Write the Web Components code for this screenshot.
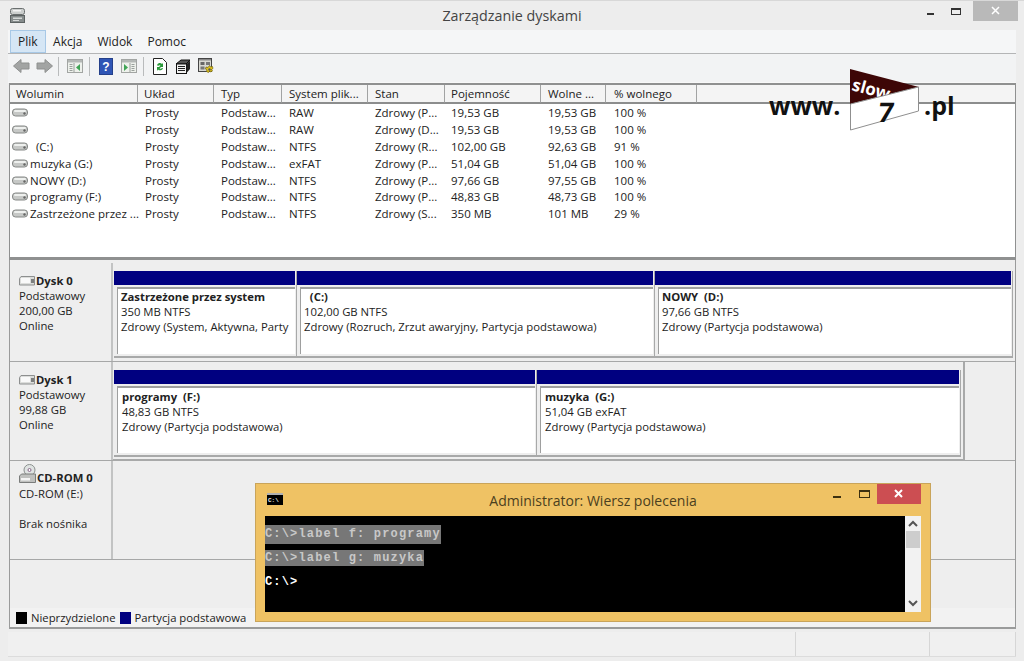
<!DOCTYPE html>
<html lang="pl">
<head>
<meta charset="utf-8">
<title>Zarządzanie dyskami</title>
<style>
    html, body { margin: 0; padding: 0; height: 100%; overflow: hidden; background: #ededed; }
    body { font: 12px "Open Sans", "Noto Sans", sans-serif; color: #222; }
</style>
</head>
<body>
<mmc-window>
    <title-bar slot="title">Zarządzanie dyskami</title-bar>
    <menu-bar slot="menu"></menu-bar>
    <tool-bar slot="tools"></tool-bar>
    <volume-list slot="list"></volume-list>
    <disk-panel slot="disks">
        <disk-row name="Dysk 0" lines="Podstawowy|200,00 GB|Online">
            <part-box style="width:183px" name="Zastrzeżone przez system" size="350 MB NTFS" state="Zdrowy (System, Aktywna, Party"></part-box>
            <part-box style="width:358px" name="&nbsp;&nbsp;(C:)" size="102,00 GB NTFS" state="Zdrowy (Rozruch, Zrzut awaryjny, Partycja podstawowa)"></part-box>
            <part-box style="width:358px" name="NOWY  (D:)" size="97,66 GB NTFS" state="Zdrowy (Partycja podstawowa)"></part-box>
        </disk-row>
        <disk-row name="Dysk 1" lines="Podstawowy|99,88 GB|Online" framed>
            <part-box style="width:423px" name="programy  (F:)" size="48,83 GB NTFS" state="Zdrowy (Partycja podstawowa)"></part-box>
            <part-box style="width:424px" name="muzyka  (G:)" size="51,04 GB exFAT" state="Zdrowy (Partycja podstawowa)"></part-box>
        </disk-row>
        <disk-row name="CD-ROM 0" lines="CD-ROM (E:)|&nbsp;|Brak nośnika" cd></disk-row>
    </disk-panel>
    <status-bar slot="status"></status-bar>
</mmc-window>
<slow-logo></slow-logo>
<cmd-window></cmd-window>

<script>
    // small icons used in more than one element
    const HDD = `<svg width="16" height="9" viewBox="0 0 16 9"><rect x=".5" y="1" width="15" height="7" rx="3" fill="#c6c8c6" stroke="#858886"/><rect x="2" y="2" width="12" height="2" rx="1" fill="#eef0ee"/><circle cx="12.500" cy="5.500" r="1.200" fill="#666"/></svg>`;
    const DISK = `<svg width="16" height="10" viewBox="0 0 16 10"><path d="M.5 2.500L2 .5h13.500v8.500H.5z" fill="#dcdddb" stroke="#8d8f8f"/><rect x="2" y="2" width="9" height="5" fill="#f9f9f9"/><rect x="12" y="3" width="3" height="4" fill="#7c7e7e"/></svg>`;
    const CD = `<svg width="17" height="19" viewBox="0 0 17 19"><circle cx="10.500" cy="6" r="5.500" fill="#dfe3e2" stroke="#8b908e"/><circle cx="10.500" cy="6" r="1.500" fill="#fff" stroke="#868"/><path d="M.5 12l2-2h14v8.500H.5z" fill="#bfc0be" stroke="#7a7c7b"/><rect x="2" y="14" width="9" height="2.500" fill="#f4f4f4"/></svg>`;

    class MmcWindow extends HTMLElement {
        constructor() {
            super();
            this.attachShadow({ mode: 'open' });
            this.shadowRoot.innerHTML = `
                <style>
                    :host { display: flex; flex-direction: column; width: 1024px; height: 661px; background: #ededed; border-top: 1px solid #d8d8d8; box-sizing: border-box; }
                    .body { display: flex; flex-direction: column; margin: 0 8px; }
                </style>
                <slot name="title"></slot>
                <div class="body">
                    <slot name="menu"></slot>
                    <slot name="tools"></slot>
                    <slot name="list"></slot>
                    <slot name="disks"></slot>
                    <slot name="status"></slot>
                </div>
            `;
        }
    }

    class TitleBar extends HTMLElement {
        constructor() {
            super();
            this.attachShadow({ mode: 'open' });
            this.shadowRoot.innerHTML = `
                <style>
                    :host { display: grid; grid-template-columns: 1fr auto 1fr; align-items: start; height: 29px; color: #444; font-size: 14.3px; }
                    .ico { padding: 7px 0 0 10px; height: 15px; }
                    .txt { padding-top: 5px; }
                    .btns { display: flex; justify-content: flex-end; padding-right: 6px; }
                    .b { width: 25px; height: 20px; display: flex; justify-content: center; }
                    .close { width: 45px; background: #b9b9b9; margin-left: 5px; }
                    svg { display: block; }
                </style>
                <div class="ico">
                    <svg width="15" height="15" viewBox="0 0 15 15"><rect x=".5" y=".5" width="14" height="6" rx="2" fill="#cbcecd" stroke="#6a6f6f"/><rect x="3" y="2" width="8" height="1.500" fill="#f3f3f3"/><rect x=".5" y="7.500" width="14" height="7" fill="#868c8c" stroke="#5c6262"/><rect x="3" y="9.500" width="9" height="1.500" fill="#d6d9d8"/><rect x="3" y="12" width="6" height="1" fill="#d6d9d8"/></svg>
                </div>
                <div class="txt"><slot></slot></div>
                <div class="btns">
                    <div class="b"><svg width="10" height="20"><rect x="1" y="12" width="7" height="2" fill="#333"/></svg></div>
                    <div class="b"><svg width="12" height="20"><rect x="1.500" y="7.500" width="9" height="6" fill="none" stroke="#333"/><rect x="1" y="7" width="10" height="2" fill="#333"/></svg></div>
                    <div class="b close"><svg width="12" height="20"><path d="M2 6l7 7M9 6l-7 7" stroke="#fff" stroke-width="1.500"/></svg></div>
                </div>
            `;
        }
    }

    class MenuBar extends HTMLElement {
        constructor() {
            super();
            this.attachShadow({ mode: 'open' });
            this.shadowRoot.innerHTML = `
                <style>
                    :host { display: flex; height: 23px; background: #f5f6f7; border-bottom: 1px solid #b4b5b6; padding-left: 2px; line-height: 24px; color: #222; }
                    span { padding: 0 7.5px; }
                    .on { background: #d5e6f5; border: 1px solid #a7c8e6; padding: 0 7px; line-height: 22px; height: 21px; }
                </style>
                <span class="on">Plik</span><span>Akcja</span><span>Widok</span><span>Pomoc</span>
            `;
        }
    }

    class ToolBar extends HTMLElement {
        constructor() {
            super();
            this.attachShadow({ mode: 'open' });
            // two mmc panes, lines on one side and the green arrow on the other
            const panel = (lines, mark) => `<svg width="16" height="14" viewBox="0 0 16 14"><rect x=".5" y=".5" width="15" height="13" fill="#eef1ec" stroke="#a2a5a3"/><rect x="1" y="1" width="14" height="2.500" fill="#b4b8b6"/><path d="${lines}" stroke="#9aa09c"/><path d="${mark}" fill="#3fa455"/></svg>`;
            this.shadowRoot.innerHTML = `
                <style>
                    :host { display: flex; align-items: center; height: 29px; box-sizing: border-box; background: #f2f3f4; padding: 0 0 4px 5px; border-bottom: 1px solid #f8f8f8; }
                    svg { display: block; flex: none; }
                    .sep { width: 1px; height: 19px; background: #b9bbbc; }
                </style>
                <svg style="margin-right:6px" width="17" height="14" viewBox="0 0 17 14"><path d="M.5 7L8 .5V4h8v6H8v3.500z" fill="#a2a4a3" stroke="#8e908f"/></svg>
                <svg style="margin-right:5px" width="17" height="14" viewBox="0 0 17 14"><path d="M16.500 7L9 .5V4H1v6h8v3.500z" fill="#a2a4a3" stroke="#8e908f"/></svg>
                <div class="sep" style="margin-right:8px"></div>
                ${panel('M2.500 5.500h3M2.500 7.500h3M2.500 9.500h3M2.500 11.500h3M7 4v9', 'M9 8.500l4-3.500v7z')}
                <div class="sep" style="margin:0 9px 0 6px"></div>
                <svg width="14" height="17" viewBox="0 0 14 17"><rect x=".5" y=".5" width="13" height="16" fill="#2f55b5" stroke="#24408a"/><text x="7" y="13" text-anchor="middle" fill="#fff" font-family="Liberation Sans" font-weight="bold" font-size="12">?</text></svg>
                <div style="width:8px"></div>
                ${panel('M10.500 5.500h3M10.500 7.500h3M10.500 9.500h3M10.500 11.500h3M9 4v9', 'M3 5l4 3.500-4 3.500z')}
                <div class="sep" style="margin:0 9px 0 6px"></div>
                <svg width="14" height="17" viewBox="0 0 14 17"><path d="M.5.5h9l4 4v12H.5z" fill="#fff" stroke="#222"/><path d="M4 7a3 3 0 0 1 5-1l1-1v4H6l1.500-1.500A2 2 0 0 0 5 8zM10 10a3 3 0 0 1-5 1.500L4 13V9h4l-1.500 1.500A2 2 0 0 0 9 10z" fill="#2a9a3a"/></svg>
                <div style="width:8px"></div>
                <svg width="16" height="15" viewBox="0 0 16 15"><path d="M1 5l5-4h9l-4 4z" fill="#555" stroke="#111"/><rect x="1.500" y="5" width="10" height="9.500" fill="#f2f2f2" stroke="#111"/><path d="M3 7.500h7M3 9.500h7M3 11.500h7" stroke="#222"/><path d="M11.500 5L15 1.500V10l-3.500 4z" fill="#222"/></svg>
                <div style="width:7px"></div>
                <svg width="16" height="16" viewBox="0 0 16 16"><rect x=".5" y=".5" width="13" height="13" fill="#d8d8d2" stroke="#444"/><rect x="1" y="1" width="12" height="1.500" fill="#888"/><rect x="2.500" y="4" width="4" height="3" fill="#666"/><rect x="8" y="4" width="4" height="3" fill="#777"/><rect x="2.500" y="8.500" width="4" height="3" fill="#777"/><path d="M11.500 7.500l1 1.500 2-.5.5 2-1.500 1 1 1.500-2 1-1-1-1 1.500-2-1 .5-1.500-1.500-1 .5-2 2 .5z" fill="#e3c51a" stroke="#6e6210" stroke-width=".7"/><circle cx="11.500" cy="11.500" r="1.200" fill="#555"/></svg>
            `;
        }
    }

    const COLS = [
        ['Wolumin', 129], ['Układ', 76], ['Typ', 68], ['System plik...', 86], ['Stan', 77],
        ['Pojemność', 96], ['Wolne ...', 65], ['% wolnego', 91]
    ];
    const ROWS = [
        ['', 'Prosty', 'Podstaw...', 'RAW', 'Zdrowy (P...', '19,53 GB', '19,53 GB', '100 %'],
        ['', 'Prosty', 'Podstaw...', 'RAW', 'Zdrowy (D...', '19,53 GB', '19,53 GB', '100 %'],
        [' (C:)', 'Prosty', 'Podstaw...', 'NTFS', 'Zdrowy (R...', '102,00 GB', '92,63 GB', '91 %'],
        ['muzyka (G:)', 'Prosty', 'Podstaw...', 'exFAT', 'Zdrowy (P...', '51,04 GB', '51,04 GB', '100 %'],
        ['NOWY (D:)', 'Prosty', 'Podstaw...', 'NTFS', 'Zdrowy (P...', '97,66 GB', '97,55 GB', '100 %'],
        ['programy (F:)', 'Prosty', 'Podstaw...', 'NTFS', 'Zdrowy (P...', '48,83 GB', '48,73 GB', '100 %'],
        ['Zastrzeżone przez ...', 'Prosty', 'Podstaw...', 'NTFS', 'Zdrowy (S...', '350 MB', '101 MB', '29 %']
    ];

    class VolumeList extends HTMLElement {
        constructor() {
            super();
            this.attachShadow({ mode: 'open' });
            const tmpl = COLS.map(c => c[1] + 'px').join(' ') + ' 1fr';
            const head = COLS.map(c => `<div class="h">${c[0]}</div>`).join('') + '<div class="h last"></div>';
            const rows = ROWS.map(r => r.map((t, i) => i === 0
                ? `<div class="c first">${HDD}<span>${t.replace(/^ /, '&nbsp;&nbsp;')}</span></div>`
                : `<div class="c">${t}</div>`).join('') + '<div></div>').join('');
            this.shadowRoot.innerHTML = `
                <style>
                    :host { display: block; height: 177px; margin-left: 1px; background: #fff; border: solid #8f9090; border-width: 2px 1px 3px 1px; box-sizing: border-box; font-size: 11.5px; color: #222; }
                    .g { display: grid; grid-template-columns: ${tmpl}; }
                    .h { height: 17px; line-height: 18px; background: #f4f4f4; border-right: 2px solid #a2a3a3; border-bottom: 2px solid #8c8d8d; padding-left: 7px; white-space: nowrap; overflow: hidden; margin-left: -1px; }
                    .h:first-child { margin-left: 0; padding-left: 6px; }
                    .h:nth-child(2), .h:nth-child(6) { padding-left: 6px; }
                    .h:nth-child(8) { padding-left: 8px; }
                    .last { border-right: 0; }
                    .rows { grid-auto-rows: 16.9px; line-height: 17px; }
                    .c { padding-left: 6px; white-space: nowrap; overflow: hidden; }
                    .c:nth-child(9n+6) { padding-left: 5px; }
                    .c:nth-child(9n+8) { padding-left: 7px; }
                    .first { display: flex; align-items: center; padding-left: 2px; gap: 2px; }
                    svg { flex: none; }
                </style>
                <div class="g">${head}</div>
                <div class="g rows">${rows}</div>
            `;
        }
    }

    class DiskPanel extends HTMLElement {
        constructor() {
            super();
            this.attachShadow({ mode: 'open' });
            this.shadowRoot.innerHTML = `
                <style>
                    :host { display: flex; flex-direction: column; height: 369px; margin-left: 1px; box-sizing: border-box; background: #eeeeee; border: solid #9a9b9b; border-width: 0 1px 2px 1px; font-size: 11.3px; }
                    .rows { flex: 1; padding-top: 3px; }
                    .legend { display: flex; align-items: center; height: 19px; padding-left: 6px; background: #f2f2f2; color: #222; }
                    .sq { width: 11px; height: 12px; margin-right: 4px; }
                </style>
                <div class="rows"><slot></slot></div>
                <div class="legend">
                    <div class="sq" style="background:#000"></div><span style="margin-right:4px">Nieprzydzielone</span>
                    <div class="sq" style="background:#000080"></div><span>Partycja podstawowa</span>
                </div>
            `;
        }
    }

    class DiskRow extends HTMLElement {
        constructor() {
            super();
            this.attachShadow({ mode: 'open' });
            const lines = this.getAttribute('lines').split('|').map(l => `<div>${l}</div>`).join('');
            const ico = this.hasAttribute('cd') ? CD : DISK;
            this.shadowRoot.innerHTML = `
                <style>
                    :host { display: flex; height: 99px; border-bottom: 1px solid #a6a7a7; box-sizing: border-box; --box-top: 0px; --box-left: 3px; }
                    :host([framed]) { --box-top: 1px; --box-left: 4px; }
                    .info { width: 103px; flex: none; box-sizing: border-box; padding: 10px 0 0 9px; border-right: 2px solid #c2c3c3; line-height: 15px; color: #222; }
                    .name { display: flex; align-items: flex-end; font-weight: 700; gap: 1px; height: 15px; }
                    :host([cd]) .name { margin: -1px 0 1px; }
                    .name svg { flex: none; margin-bottom: 2px; }
                    .parts { display: flex; flex: 1; align-self: flex-start; padding: 8px 0 0 1px; }
                    :host([framed]) .parts { flex: none; border: solid #a8a9a9; border-width: 0 2px 2px 0; padding-right: 2px; padding-bottom: 2px; }
                </style>
                <div class="info"><div class="name">${ico}<span>${this.getAttribute('name')}</span></div>${lines}</div>
                <div class="parts"><slot></slot></div>
            `;
        }
    }

    class PartBox extends HTMLElement {
        constructor() {
            super();
            this.attachShadow({ mode: 'open' });
            this.shadowRoot.innerHTML = `
                <style>
                    :host { display: block; flex: none; box-sizing: border-box; border-right: 1px solid #a8a9a9; border-bottom: 2px solid #a8a9a9; padding-right: 1px; line-height: 15px; color: #222; }
                    .bar { height: 14px; background: #000080; }
                    .box { margin: 2px 0 2px 3px; height: 67px; box-sizing: border-box; background: #fff; border: solid #9e9f9f; border-width: 2px 0 0 1px; padding: var(--box-top, 0) 0 0 var(--box-left, 3px); white-space: nowrap; overflow: hidden; }
                    b { white-space: pre; }
                </style>
                <div class="bar"></div>
                <div class="box">
                    <b>${this.getAttribute('name')}</b>
                    <div>${this.getAttribute('size')}</div>
                    <div>${this.getAttribute('state')}</div>
                </div>
            `;
        }
    }

    class StatusBar extends HTMLElement {
        constructor() {
            super();
            this.attachShadow({ mode: 'open' });
            this.shadowRoot.innerHTML = `
                <style>
                    :host { display: grid; grid-template-columns: 788px 134px 1fr; height: 24px; margin-top: 3px; background: #f0f0f0; border-bottom: 1px solid #dcdcdc; }
                    div { border-right: 1px solid #d6d6d6; }
                </style>
                <div></div><div></div><div></div>
            `;
        }
    }

    // logo sits over the list header, same as on the picture
    class SlowLogo extends HTMLElement {
        constructor() {
            super();
            this.attachShadow({ mode: 'open' });
            this.shadowRoot.innerHTML = `
                <style>
                    :host { display: block; position: absolute; left: 765px; top: 65px; width: 200px; height: 70px; }
                    svg { display: block; }
                </style>
                <svg width="200" height="70" viewBox="0 0 200 70" font-family="Open Sans, sans-serif" font-weight="700">
                    <text x="4" y="50" font-size="25" fill="#111">www.</text>
                    <path d="M85 4l69 18-69 17z" fill="#3d0606"/>
                    <text transform="translate(86 25) rotate(15)" font-size="17" fill="#fff">slow</text>
                    <path d="M85.500 39l68-17v24l-68 19z" fill="#fff" stroke="#8f8f8f"/>
                    <text transform="translate(112 57) skewX(-8)" font-size="27" fill="#111">7</text>
                    <text x="159" y="50" font-size="25" fill="#111">.pl</text>
                </svg>
            `;
        }
    }

    // console window floats above the main one
    class CmdWindow extends HTMLElement {
        constructor() {
            super();
            this.attachShadow({ mode: 'open' });
            this.shadowRoot.innerHTML = `
                <style>
                    :host { display: flex; flex-direction: column; position: absolute; left: 255px; top: 483px; width: 676px; height: 139px; box-sizing: border-box; background: #efc264; border: 1px solid #c9a45a; padding: 0 9px 9px; }
                    .top { display: flex; align-items: flex-start; height: 32px; flex: none; color: #4b4020; font-size: 14px; }
                    .top svg { display: block; }
                    .ico { padding: 9px 0 0 2px; width: 300px; }
                    .ttl { padding-top: 7px; position: absolute; left: 0; right: 0; text-align: center; }
                    .btn { margin-left: auto; display: flex; position: relative; }
                    .b { width: 25px; height: 20px; display: flex; justify-content: center; }
                    .m { margin-right: 2px; }
                    .x { width: 44px; background: #cc4e52; margin-left: 0; }
                    .main { display: flex; flex: 1; min-height: 0; }
                    .con { flex: 1; background: #000; padding-top: 9px; font: 700 12px/16px "Liberation Mono", monospace; letter-spacing: 1.17px; color: #fff; white-space: pre; }
                    .sel { display: block; width: max-content; background: #777; color: #c8c8c8; height: 19px; line-height: 18px; margin-bottom: 6px; }
                    .sel + .sel { height: 16px; line-height: 16px; margin-bottom: 8px; }
                    .sb { width: 16px; background: #f2f2f2; display: flex; flex-direction: column; align-items: center; padding-top: 4px; box-sizing: border-box; }
                    .th { width: 14px; height: 17px; background: #cdcdcd; margin-top: 4px; }
                    .sp { flex: 1; }
                    .lbl { fill: #eee; font: 700 6px "Liberation Mono", monospace; }
                </style>
                <div class="top">
                    <div class="ico"><svg width="16" height="12"><rect width="16" height="12" fill="#000"/><rect width="16" height="2" fill="#b0b0b0"/><text class="lbl" x="1" y="9">C:\\</text></svg></div>
                    <div class="ttl">Administrator: Wiersz polecenia</div>
                    <div class="btn">
                        <div class="b m"><svg width="10" height="20"><rect x="0" y="12" width="8" height="2" fill="#3c3010"/></svg></div>
                        <div class="b"><svg width="12" height="20"><rect x=".5" y="6.500" width="10" height="7" fill="none" stroke="#3c3010"/><rect y="6" width="11" height="2" fill="#3c3010"/></svg></div>
                        <div class="b x"><svg width="12" height="20"><path d="M2 6l7 7M9 6l-7 7" stroke="#fff" stroke-width="2"/></svg></div>
                    </div>
                </div>
                <div class="main">
                    <div class="con"><span class="sel">C:\\>label f: programy</span><span class="sel">C:\\>label g: muzyka</span>C:\\></div>
                    <div class="sb">
                        <svg width="10" height="7"><path d="M1 6l4-4 4 4" fill="none" stroke="#555" stroke-width="2"/></svg>
                        <div class="th"></div>
                        <div class="sp"></div>
                        <svg width="10" height="7" style="margin-bottom:5px"><path d="M1 1l4 4 4-4" fill="none" stroke="#555" stroke-width="2"/></svg>
                    </div>
                </div>
            `;
        }
    }

    customElements.define('mmc-window', MmcWindow);
    customElements.define('title-bar', TitleBar);
    customElements.define('menu-bar', MenuBar);
    customElements.define('tool-bar', ToolBar);
    customElements.define('volume-list', VolumeList);
    customElements.define('disk-panel', DiskPanel);
    customElements.define('disk-row', DiskRow);
    customElements.define('part-box', PartBox);
    customElements.define('status-bar', StatusBar);
    customElements.define('slow-logo', SlowLogo);
    customElements.define('cmd-window', CmdWindow);
</script>
</body>
</html>
